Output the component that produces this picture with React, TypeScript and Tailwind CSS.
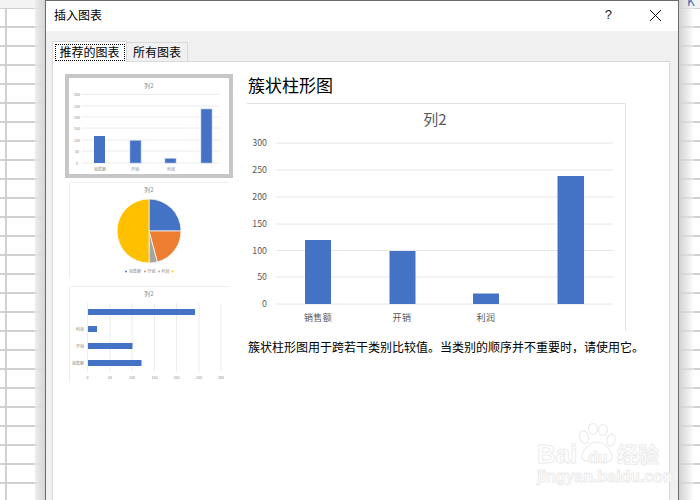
import React from "react";

const FONT = '"Noto Sans CJK SC", "Liberation Sans", sans-serif';
const rows = Array.from({ length: 26 }, (_, i) => i);

function Thumb({ selected, children }: { selected?: boolean; children: React.ReactNode }) {
  return (
    <div className={selected ? "w-[168px] h-[104px] border-4 border-[#c6c6c6] bg-white" : "w-[168px] h-[104px] border-4 border-transparent bg-white"}>
      {children}
    </div>
  );
}

const small = { fontFamily: FONT, fill: "#8a8a8a" };

function ColumnThumb() {
  const ys = [94.5, 106, 117, 128, 140, 151, 163];
  const labels = ["300", "250", "200", "150", "100", "50", "0"];
  return (
    <svg width="160" height="96" viewBox="69 78 160 96" className="block">
      <text x="149" y="88" fontSize="6" textAnchor="middle" {...small}>列2</text>
      {ys.map((y, i) => (
        <g key={y}>
          <line x1="82" x2="220" y1={y} y2={y} stroke="#ececec" strokeWidth="1" />
          <text x="77" y={y + 1.5} fontSize="3.6" textAnchor="middle" {...small}>{labels[i]}</text>
        </g>
      ))}
      <rect x="94" y="136" width="11" height="27" fill="#4472c4" />
      <rect x="130" y="140.5" width="11" height="22.5" fill="#4472c4" stroke="#a9bde3" strokeWidth="0.6" />
      <rect x="165" y="158.5" width="11" height="4.5" fill="#4472c4" stroke="#a9bde3" strokeWidth="0.6" />
      <rect x="201" y="109" width="11" height="54" fill="#4472c4" stroke="#a9bde3" strokeWidth="0.6" />
      <text x="100" y="171" fontSize="4" textAnchor="middle" {...small}>销售额</text>
      <text x="135" y="171" fontSize="4" textAnchor="middle" {...small}>开销</text>
      <text x="171" y="171" fontSize="4" textAnchor="middle" {...small}>利润</text>
    </svg>
  );
}

function PieThumb() {
  const cx = 149, cy = 231, r = 32;
  const pt = (deg: number) => {
    const a = ((deg - 90) * Math.PI) / 180;
    return `${(cx + r * Math.cos(a)).toFixed(2)} ${(cy + r * Math.sin(a)).toFixed(2)}`;
  };
  const slice = (a: number, b: number) => `M${cx} ${cy}L${pt(a)}A${r} ${r} 0 ${b - a > 180 ? 1 : 0} 1 ${pt(b)}Z`;
  return (
    <svg width="160" height="96" viewBox="69 182 160 96" className="block">
      <path d="M69.5 278V182.5H229" fill="none" stroke="#eeeeee" />
      <text x="149" y="192" fontSize="6" textAnchor="middle" {...small}>列2</text>
      <path d={slice(0, 90)} fill="#4472c4" stroke="#fff" strokeWidth="0.7" />
      <path d={slice(90, 165)} fill="#ed7d31" stroke="#fff" strokeWidth="0.7" />
      <path d={slice(165, 180)} fill="#a5a5a5" stroke="#fff" strokeWidth="0.7" />
      <path d={slice(180, 360)} fill="#ffc000" stroke="#fff" strokeWidth="0.7" />
      <circle cx="126" cy="271.5" r="0.9" fill="#4472c4" />
      <text x="129" y="273" fontSize="4" {...small}>销售额</text>
      <circle cx="145" cy="271.5" r="0.9" fill="#ed7d31" />
      <text x="147.5" y="273" fontSize="4" {...small}>开销</text>
      <circle cx="159" cy="271.5" r="0.9" fill="#a5a5a5" />
      <text x="161.5" y="273" fontSize="4" {...small}>利润</text>
      <circle cx="172.5" cy="271.5" r="0.9" fill="#ffc000" />
    </svg>
  );
}

function BarThumb() {
  const xs = [87.5, 110, 132, 154.5, 176.5, 199, 221];
  const labels = ["0", "50", "100", "150", "200", "250", "300"];
  return (
    <svg width="160" height="96" viewBox="69 286 160 96" className="block">
      <path d="M69.5 382V286.5H229" fill="none" stroke="#eeeeee" />
      <text x="149" y="296" fontSize="6" textAnchor="middle" {...small}>列2</text>
      {xs.map((x, i) => (
        <g key={x}>
          <line x1={x} x2={x} y1="303" y2="372" stroke="#ececec" />
          <text x={x} y="378.5" fontSize="3.6" textAnchor="middle" {...small}>{labels[i]}</text>
        </g>
      ))}
      <rect x="88" y="309" width="107" height="6" fill="#4472c4" />
      <rect x="88" y="326" width="9" height="6" fill="#4472c4" />
      <rect x="88" y="343" width="44.5" height="6" fill="#4472c4" />
      <rect x="88" y="360" width="53.5" height="6" fill="#4472c4" />
      <text x="84" y="330.5" fontSize="4" textAnchor="end" {...small}>利润</text>
      <text x="84" y="347.5" fontSize="4" textAnchor="end" {...small}>开销</text>
      <text x="84" y="364.5" fontSize="4" textAnchor="end" {...small}>销售额</text>
    </svg>
  );
}

function MainChart() {
  const ys = [143, 170, 197, 224, 250.5, 277, 304];
  const labels = ["300", "250", "200", "150", "100", "50", "0"];
  const text = { fontFamily: FONT, fill: "#595959" };
  return (
    <svg width="379" height="228" viewBox="247 103 379 228" className="block">
      <path d="M247 103.5H625.5V331" fill="none" stroke="#e3e3e3" />
      <text x="435" y="125" fontSize="15" textAnchor="middle" {...text}>列2</text>
      {ys.map((y, i) => (
        <g key={y}>
          <line x1="276" x2="613" y1={y} y2={y} stroke="#e6e6e6" />
          <text x="267" y={y + 3} fontSize="8.8" textAnchor="end" {...text}>{labels[i]}</text>
        </g>
      ))}
      <rect x="305" y="240" width="26" height="64" fill="#4472c4" />
      <rect x="389.5" y="251" width="26" height="53" fill="#4472c4" />
      <rect x="473" y="293.5" width="26" height="10.5" fill="#4472c4" />
      <rect x="557.5" y="176" width="26.5" height="128" fill="#4472c4" />
      <text x="318" y="321" fontSize="9" textAnchor="middle" letterSpacing="0.4" {...text}>销售额</text>
      <text x="402" y="321" fontSize="9" textAnchor="middle" letterSpacing="0.4" {...text}>开销</text>
      <text x="486" y="321" fontSize="9" textAnchor="middle" letterSpacing="0.4" {...text}>利润</text>
    </svg>
  );
}

function Watermark() {
  return (
    <div className="absolute left-[531px] top-[423px] w-[140px] h-[66px] pointer-events-none">
      <svg width="42" height="42" viewBox="0 0 42 42" className="absolute left-[47px] top-0">
        <g fill="none" stroke="#ececec" strokeWidth="1.2">
          <ellipse cx="6" cy="14" rx="4.5" ry="6.5" transform="rotate(-15 6 14)" />
          <ellipse cx="15" cy="6" rx="4.5" ry="5.5" />
          <ellipse cx="25" cy="7" rx="4.5" ry="5.5" />
          <ellipse cx="33" cy="17" rx="4" ry="6" transform="rotate(15 33 17)" />
          <path d="M4 33C6 24 13 19 19 19S32 24 34 33C35 39 27 40 19 39S3 39 4 33Z" />
        </g>
      </svg>
      <div className="absolute left-[6px] top-[17px] text-[26px] leading-[28px] font-bold text-white [-webkit-text-stroke:1px_#ececec] [font-family:'Liberation_Sans',sans-serif]">Bai</div>
      <div className="absolute left-[57px] top-[26px] text-[16px] leading-[18px] font-bold text-white [-webkit-text-stroke:1px_#ececec] [font-family:'Liberation_Sans',sans-serif]">du</div>
      <div className="absolute left-[86px] top-[16px] text-[21px] leading-[28px] font-bold text-white [-webkit-text-stroke:1px_#ececec] [font-family:'Noto_Sans_CJK_SC',sans-serif]">经验</div>
      <div className="absolute left-[6px] top-[45px] text-[16px] leading-[18px] font-bold text-white [-webkit-text-stroke:1px_#ececec] [font-family:'Liberation_Sans',sans-serif]">jingyan.baidu.com</div>
    </div>
  );
}

export default function App() {
  return (
    <div className="relative w-[700px] h-[500px] overflow-hidden bg-white [font-family:'Noto_Sans_CJK_SC','Liberation_Sans',sans-serif]">
      <div className="flex flex-col">
        <div className="h-[9px] border-b border-[#cfcfcf] bg-[#f3f3f3] shrink-0" />
        {rows.map((r) => (
          <div key={r} className="h-[19px] border-b-2 border-[#d0d0d0] shrink-0">
            <div className="w-[7px] h-full border-r-2 border-[#d0d0d0]" />
          </div>
        ))}
      </div>

      <div className="absolute left-[35px] top-0 w-[10px] h-full bg-gradient-to-r from-[#e9e9e9]/80 to-[#d6d6d6]" />
      <div className="absolute left-[678px] top-0 w-[16px] h-full bg-gradient-to-r from-[#cfcfcf] to-white/40" />
      <div className="absolute left-[687px] top-[-6px] text-[12px] leading-[14px] text-[#3c6fa8]">K</div>

      <div className="absolute left-[45px] top-0 w-[634px] h-[500px] border-x border-t border-[#6b6b6b] bg-[#f0f0f0] flex flex-col">
        <div className="h-[30px] bg-white flex items-center justify-between shrink-0 pl-2 pr-[16px] pb-[2px]">
          <span className="text-[12px] text-black">插入图表</span>
          <div className="flex items-center gap-[37px]">
            <span className="text-[13px] text-[#222] [font-family:'Liberation_Sans',sans-serif]">?</span>
            <svg width="13" height="13" viewBox="0 0 13 13">
              <path d="M1 1L12 12M12 1L1 12" stroke="#111" strokeWidth="1" fill="none" />
            </svg>
          </div>
        </div>

        <div className="flex-1 flex flex-col pl-[6px] pr-2 pt-[9px]">
          <div className="flex items-end h-[21px] shrink-0 relative z-10">
            <div className="w-[75px] h-[21px] bg-white border-x border-t border-[#d9d9d9] flex items-center justify-center mb-[-1px]">
              <span className="w-[70px] h-[17px] border border-dotted border-black flex items-center justify-center text-[12px] leading-none text-black">推荐的图表</span>
            </div>
            <div className="w-[61px] h-[19px] border-r border-t border-[#d9d9d9] flex items-center justify-center text-[12px] leading-none text-black">所有图表</div>
          </div>

          <div className="flex-1 bg-white border-x border-t border-[#d9d9d9] flex pl-3 pt-3">
            <div className="flex flex-col w-[168px]">
              <Thumb selected><ColumnThumb /></Thumb>
              <Thumb><PieThumb /></Thumb>
              <Thumb><BarThumb /></Thumb>
            </div>
            <div className="ml-[14px] flex flex-col w-[400px]">
              <h2 className="h-[24px] mb-[5px] pl-px text-[17px] leading-[22px] text-black font-normal">簇状柱形图</h2>
              <MainChart />
              <p className="mt-2 pl-px text-[12px] leading-[16px] text-black">簇状柱形图用于跨若干类别比较值。当类别的顺序并不重要时，请使用它。</p>
            </div>
          </div>
        </div>
      </div>

      <Watermark />
    </div>
  );
}
